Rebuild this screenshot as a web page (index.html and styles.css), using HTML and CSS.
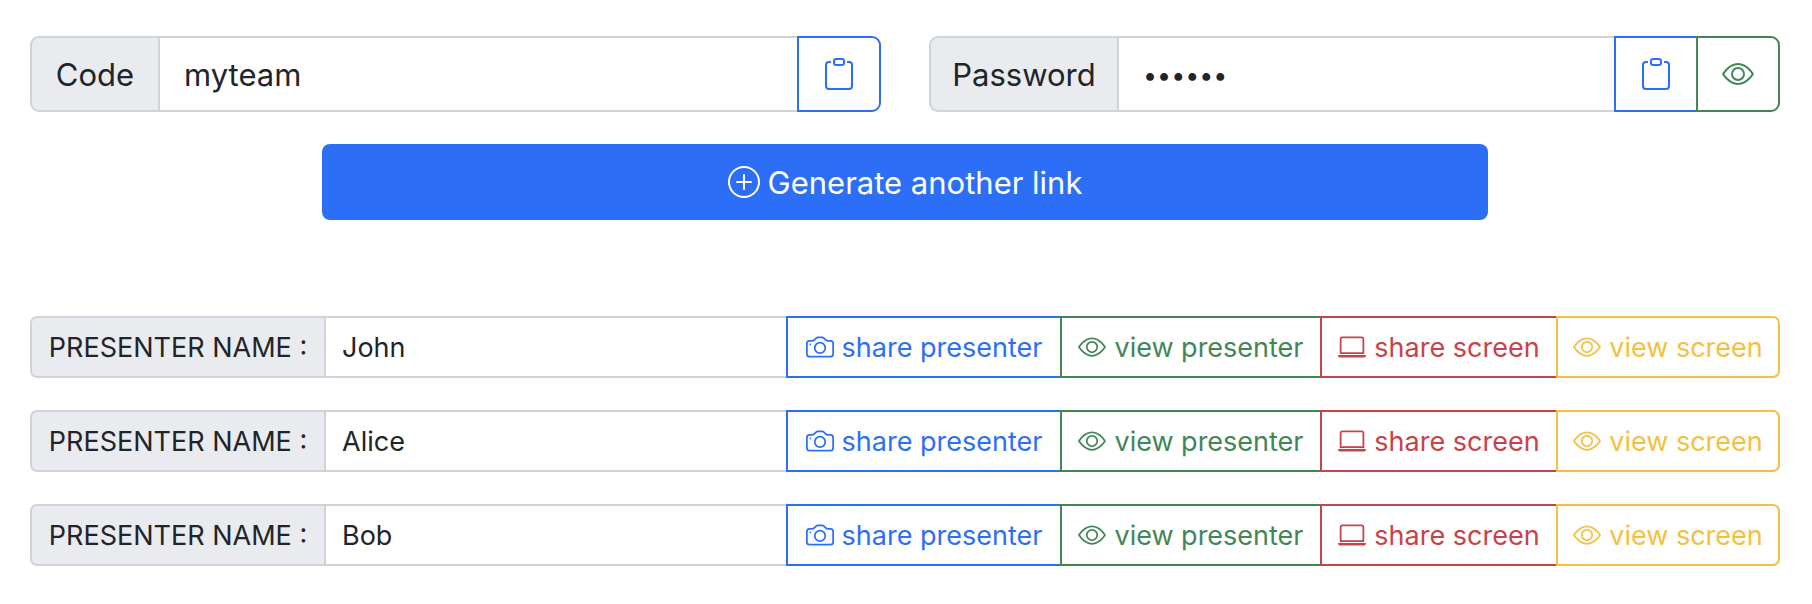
FILE: index.html
```html
<!DOCTYPE html>
<html lang="en">
<head>
<meta charset="utf-8">
<meta name="viewport" content="width=device-width, initial-scale=1">
<title>Generate links</title>
<link rel="stylesheet" href="styles.css">
</head>
<body>
<svg class="sprite" aria-hidden="true">
  <symbol id="clipboard" viewBox="0 0 16 16">
    <path d="M4 1.5H3a2 2 0 0 0-2 2V14a2 2 0 0 0 2 2h10a2 2 0 0 0 2-2V3.5a2 2 0 0 0-2-2h-1v1h1a1 1 0 0 1 1 1V14a1 1 0 0 1-1 1H3a1 1 0 0 1-1-1V3.5a1 1 0 0 1 1-1h1v-1z"/>
    <path d="M9.5 1a.5.5 0 0 1 .5.5v1a.5.5 0 0 1-.5.5h-3a.5.5 0 0 1-.5-.5v-1a.5.5 0 0 1 .5-.5h3zm-3-1A1.5 1.5 0 0 0 5 1.5v1A1.5 1.5 0 0 0 6.5 4h3A1.5 1.5 0 0 0 11 2.5v-1A1.5 1.5 0 0 0 9.5 0h-3z"/>
  </symbol>
  <symbol id="eye" viewBox="0 0 16 16">
    <path d="M16 8s-3-5.500-8-5.500S0 8 0 8s3 5.500 8 5.500S16 8 16 8zM1.173 8a13.133 13.133 0 0 1 1.660-2.043C4.120 4.668 5.880 3.500 8 3.500c2.120 0 3.879 1.168 5.168 2.457A13.133 13.133 0 0 1 14.828 8c-.058.087-.122.183-.195.288-.335.480-.830 1.120-1.465 1.755C11.879 11.332 10.119 12.500 8 12.500c-2.120 0-3.879-1.168-5.168-2.457A13.134 13.134 0 0 1 1.172 8z"/>
    <path d="M8 5.500a2.500 2.500 0 1 0 0 5 2.500 2.500 0 0 0 0-5zM4.500 8a3.500 3.500 0 1 1 7 0 3.500 3.500 0 0 1-7 0z"/>
  </symbol>
  <symbol id="plus-circle" viewBox="0 0 16 16">
    <path d="M8 15A7 7 0 1 1 8 1a7 7 0 0 1 0 14zm0 1A8 8 0 1 0 8 0a8 8 0 0 0 0 16z"/>
    <path d="M8 4a.5.5 0 0 1 .5.5v3h3a.5.5 0 0 1 0 1h-3v3a.5.5 0 0 1-1 0v-3h-3a.5.5 0 0 1 0-1h3v-3A.5.5 0 0 1 8 4z"/>
  </symbol>
  <symbol id="camera" viewBox="0 0 16 16">
    <path d="M15 12a1 1 0 0 1-1 1H2a1 1 0 0 1-1-1V6a1 1 0 0 1 1-1h1.172a3 3 0 0 0 2.120-.879l.830-.828A1 1 0 0 1 6.827 3h2.344a1 1 0 0 1 .707.293l.828.828A3 3 0 0 0 12.828 5H14a1 1 0 0 1 1 1v6zM2 4a2 2 0 0 0-2 2v6a2 2 0 0 0 2 2h12a2 2 0 0 0 2-2V6a2 2 0 0 0-2-2h-1.172a2 2 0 0 1-1.414-.586l-.828-.828A2 2 0 0 0 9.172 2H6.828a2 2 0 0 0-1.414.586l-.828.828A2 2 0 0 1 3.172 4H2z"/>
    <path d="M8 11a2.500 2.500 0 1 1 0-5 2.500 2.500 0 0 1 0 5zm0 1a3.500 3.500 0 1 0 0-7 3.500 3.500 0 0 0 0 7zM3 6.500a.5.5 0 1 1-1 0 .5.5 0 0 1 1 0z"/>
  </symbol>
  <symbol id="laptop" viewBox="0 0 16 16">
    <path d="M13.5 3a.5.5 0 0 1 .5.5V11H2V3.500a.5.5 0 0 1 .5-.5h11zm-11-1A1.500 1.500 0 0 0 1 3.500V12h14V3.500A1.500 1.500 0 0 0 13.500 2h-11zM0 12.500h16a1.500 1.500 0 0 1-1.500 1.500h-13A1.500 1.500 0 0 1 0 12.500z"/>
  </symbol>
</svg>
<main class="page">
  <div class="access">
    <div class="group group-lg">
      <label class="addon addon-code" for="code">Code</label>
      <input class="field" id="code" type="text" value="myteam">
      <button class="btn blue" type="button" aria-label="Copy code"><svg class="icon"><use href="#clipboard"/></svg></button>
    </div>
    <div class="group group-lg">
      <label class="addon addon-password" for="password">Password</label>
      <input class="field field-password" id="password" type="password" value="secret">
      <button class="btn blue" type="button" aria-label="Copy password"><svg class="icon"><use href="#clipboard"/></svg></button>
      <button class="btn green" type="button" aria-label="Show password"><svg class="icon"><use href="#eye"/></svg></button>
    </div>
  </div>
  <button class="generate" type="button"><svg class="icon"><use href="#plus-circle"/></svg><span class="text">Generate another link</span></button>
  <div class="presenters">
    <div class="group">
      <label class="addon" for="name-1">PRESENTER NAME :</label>
      <input class="field" id="name-1" type="text" value="John">
      <button class="btn blue share-presenter" type="button"><svg class="icon"><use href="#camera"/></svg><span class="text">share presenter</span></button>
      <button class="btn green view-presenter" type="button"><svg class="icon"><use href="#eye"/></svg><span class="text">view presenter</span></button>
      <button class="btn red share-screen" type="button"><svg class="icon"><use href="#laptop"/></svg><span class="text">share screen</span></button>
      <button class="btn yellow view-screen" type="button"><svg class="icon"><use href="#eye"/></svg><span class="text">view screen</span></button>
    </div>
    <div class="group">
      <label class="addon" for="name-2">PRESENTER NAME :</label>
      <input class="field" id="name-2" type="text" value="Alice">
      <button class="btn blue share-presenter" type="button"><svg class="icon"><use href="#camera"/></svg><span class="text">share presenter</span></button>
      <button class="btn green view-presenter" type="button"><svg class="icon"><use href="#eye"/></svg><span class="text">view presenter</span></button>
      <button class="btn red share-screen" type="button"><svg class="icon"><use href="#laptop"/></svg><span class="text">share screen</span></button>
      <button class="btn yellow view-screen" type="button"><svg class="icon"><use href="#eye"/></svg><span class="text">view screen</span></button>
    </div>
    <div class="group">
      <label class="addon" for="name-3">PRESENTER NAME :</label>
      <input class="field" id="name-3" type="text" value="Bob">
      <button class="btn blue share-presenter" type="button"><svg class="icon"><use href="#camera"/></svg><span class="text">share presenter</span></button>
      <button class="btn green view-presenter" type="button"><svg class="icon"><use href="#eye"/></svg><span class="text">view presenter</span></button>
      <button class="btn red share-screen" type="button"><svg class="icon"><use href="#laptop"/></svg><span class="text">share screen</span></button>
      <button class="btn yellow view-screen" type="button"><svg class="icon"><use href="#eye"/></svg><span class="text">view screen</span></button>
    </div>
  </div>
</main>
</body>
</html>
```
FILE: styles.css
```css
* {
  box-sizing: border-box;
}

body {
  margin: 0;
  background: #fff;
  color: #212529;
  font-family: Inter, "Liberation Sans", sans-serif;
}

.sprite {
  display: none;
}

.page {
  display: flex;
  flex-direction: column;
  padding: 36px 32px 36px 30px;
}

.access {
  display: grid;
  grid-template-columns: 1fr 1fr;
  gap: 48px;
}

.group {
  display: flex;
  min-width: 0;
  font-size: 27px;
  line-height: 42px;
}

.addon {
  flex: none;
  width: 296px;
  padding: 9px 0 7px;
  border: 2px solid #ced4d9;
  background: #e9ebef;
  text-align: center;
  white-space: nowrap;
}

.field {
  flex: 1;
  width: 0;
  min-width: 0;
  margin: 0 0 0 -2px;
  padding: 9px 16px 7px;
  border: 2px solid #ced4d9;
  border-radius: 0;
  background: #fff;
  color: inherit;
  font: inherit;
  outline: 0;
}

.btn,
.generate {
  display: flex;
  align-items: center;
  justify-content: center;
  gap: 8px;
  font: inherit;
  white-space: nowrap;
  cursor: pointer;
}

.btn {
  flex: none;
  margin: 0 0 0 -2px;
  padding: 0;
  border: 2px solid currentColor;
  border-radius: 0;
  background: #fff;
}

.text {
  padding-top: 2px;
}

.icon {
  flex: none;
  width: 28px;
  height: 28px;
  fill: currentColor;
}

.group > :first-child {
  border-radius: 7px 0 0 7px;
}

.group > :last-child {
  border-radius: 0 7px 7px 0;
}

.blue { color: #2c6ff6; }
.green { color: #438656; }
.red { color: #c84248; }
.yellow { color: #f4bf42; }

.share-presenter { width: 276px; }
.view-presenter { width: 262px; }
.share-screen { width: 238px; }
.view-screen { width: 224px; }

.group-lg {
  font-size: 31px;
  line-height: 48px;
}

.group-lg > :first-child {
  border-radius: 9px 0 0 9px;
}

.group-lg > :last-child {
  border-radius: 0 9px 9px 0;
}

.group-lg .addon,
.group-lg .field {
  padding-top: 13px;
  padding-bottom: 11px;
}

.group-lg .field {
  padding-left: 24px;
  padding-right: 24px;
}

.group-lg .field-password {
  font-size: 25px;
}

.addon-code { width: 130px; }
.addon-password { width: 190px; }

.group-lg .btn {
  width: 84px;
}

.group-lg .icon,
.generate .icon {
  width: 32px;
  height: 32px;
}

.generate {
  align-self: center;
  width: 66.667%;
  margin: 32px 0 0;
  padding: 13px 24px;
  border: 0;
  border-radius: 8px;
  background: #2c6ff6;
  color: #fff;
  font-size: 31px;
  line-height: 48px;
}

.presenters {
  display: grid;
  gap: 32px;
  margin-top: 96px;
}
```
